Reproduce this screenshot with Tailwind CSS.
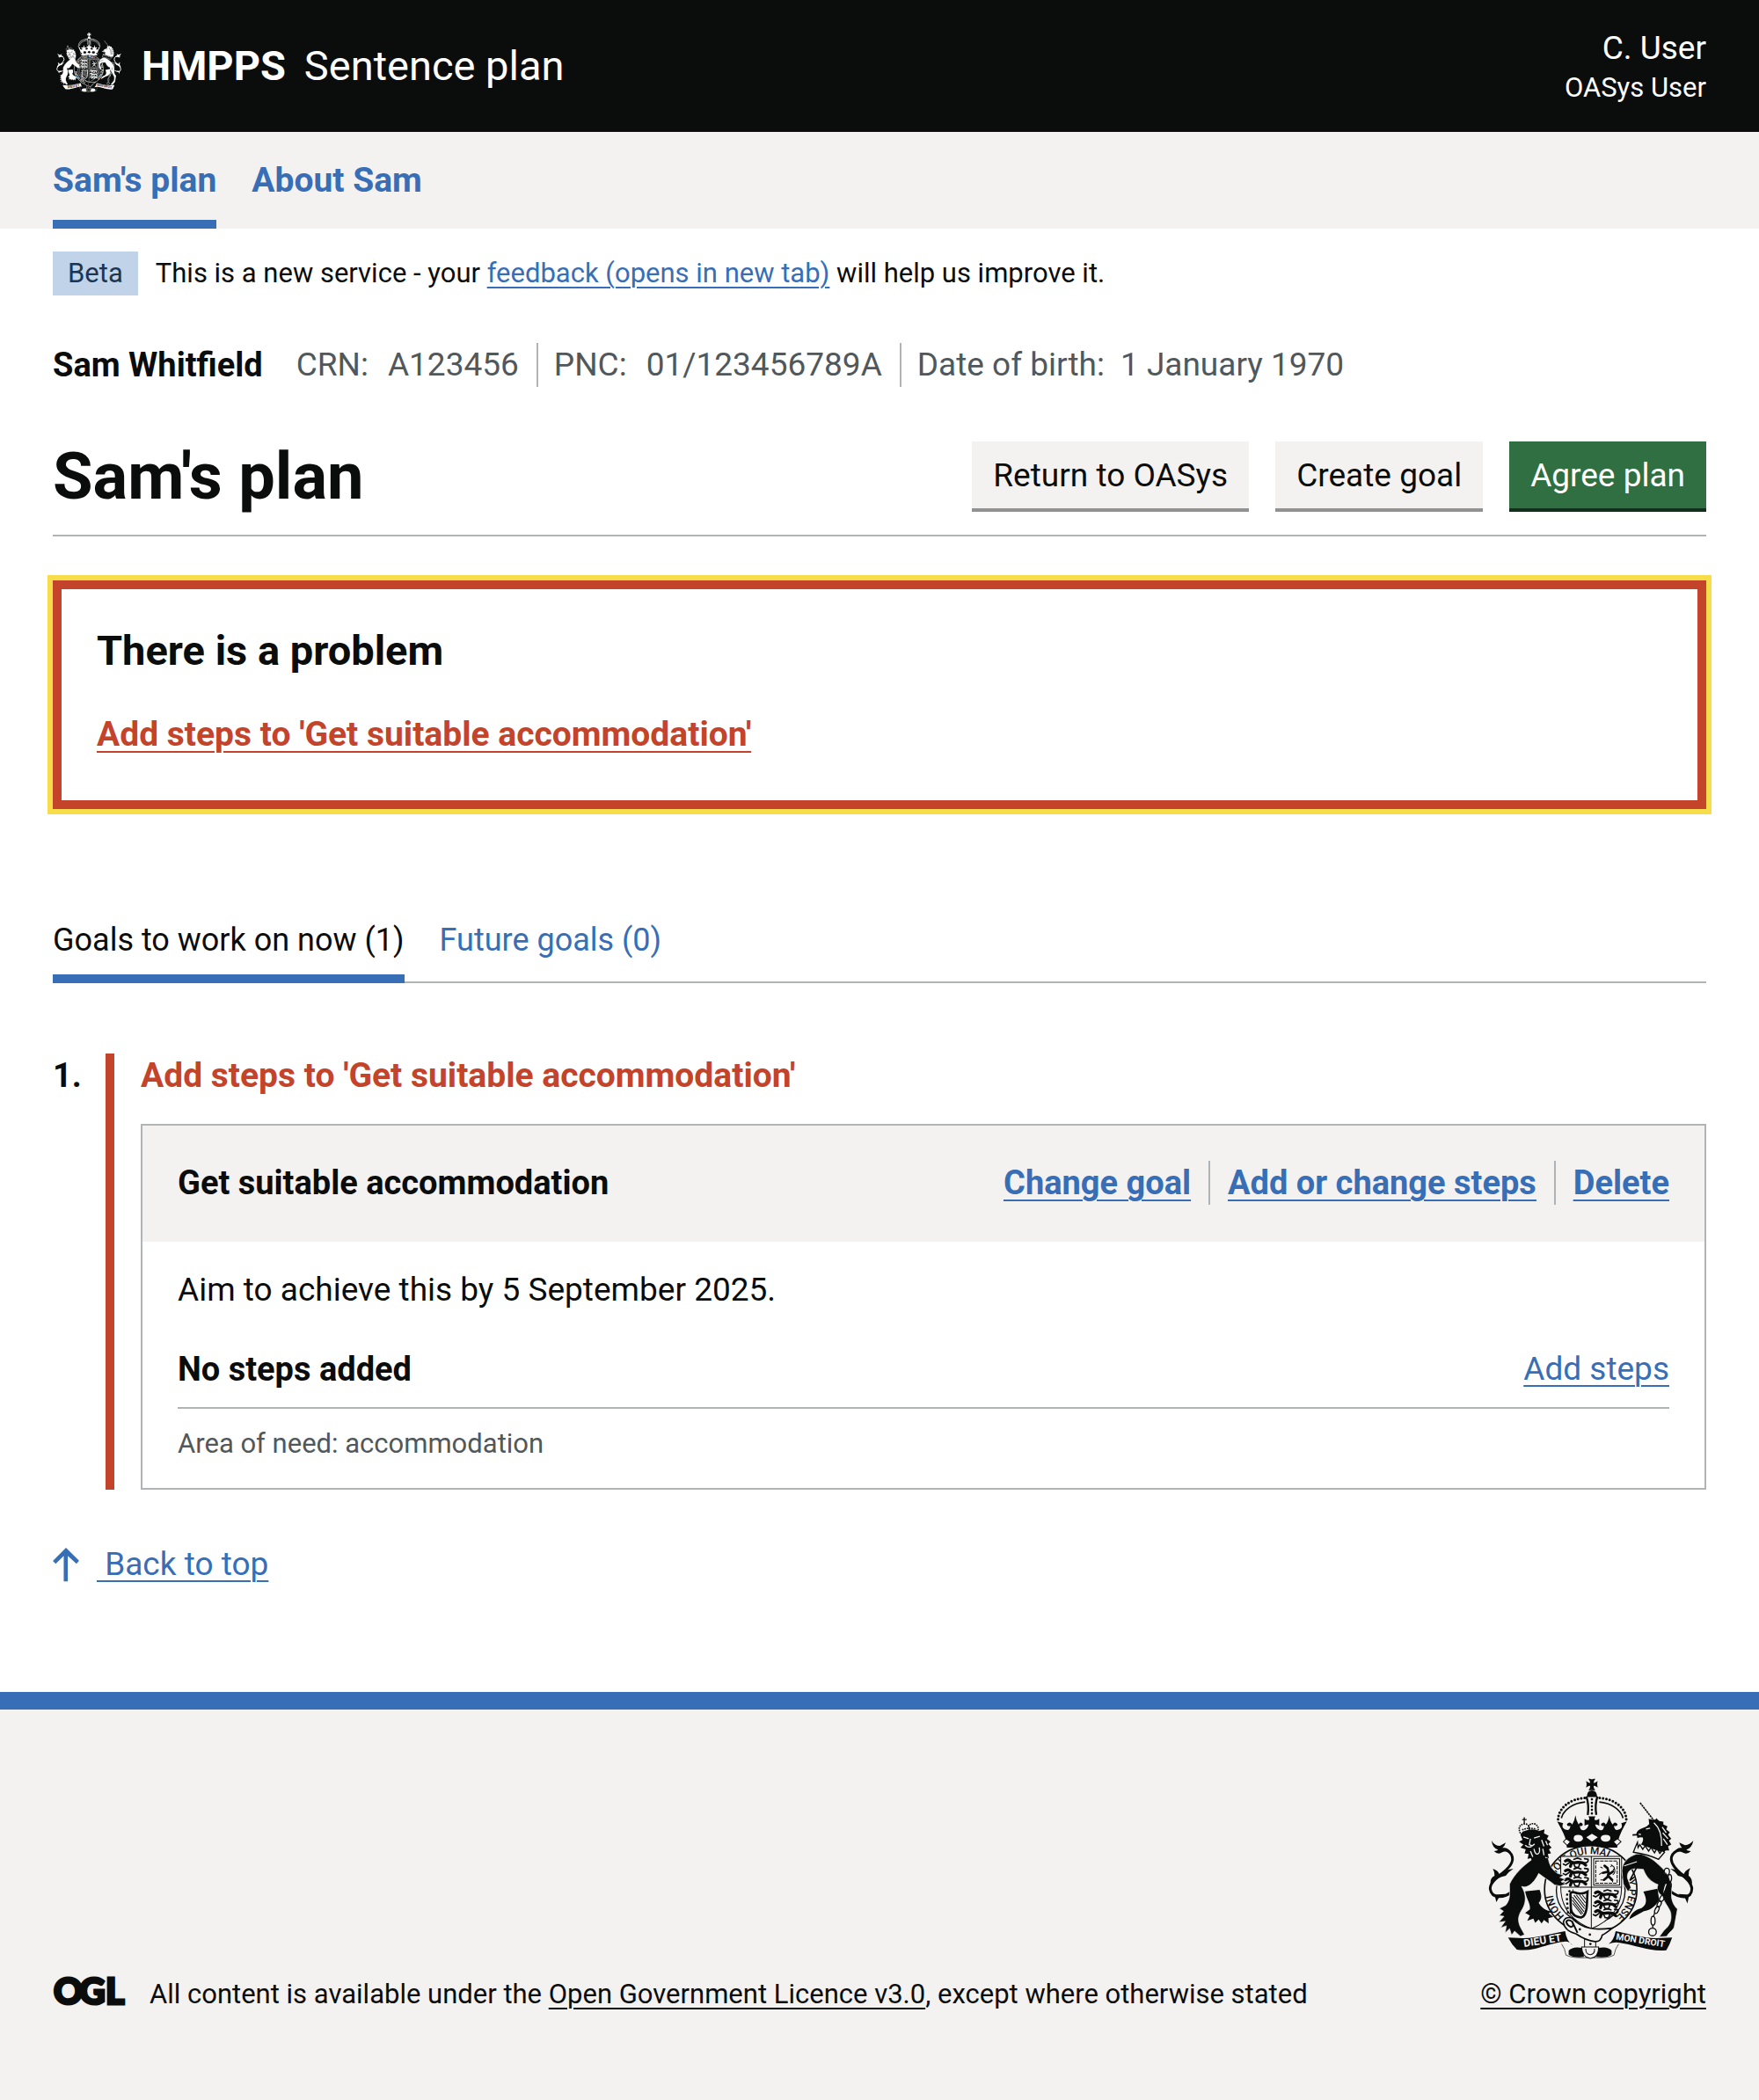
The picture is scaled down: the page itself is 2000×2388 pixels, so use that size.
<!DOCTYPE html>
<html lang="en">
<head>
<meta charset="utf-8">
<meta name="viewport" content="width=device-width, initial-scale=1">
<title>Sam's plan - Sentence plan</title>
<script src="https://cdn.jsdelivr.net/npm/@tailwindcss/browser@4"></script>
</head>
<body class="min-h-screen flex flex-col bg-white font-['Roboto',sans-serif] text-[37px] leading-[50px] text-[#0b0c0c]">

<svg class="hidden" aria-hidden="true">
  <symbol id="crest" viewBox="40 70 700 616" preserveAspectRatio="none">
    <!-- crown -->
    <path fill="currentColor" d="M381 72l6 0q6 4 12 0l6 0q-7 9-6 14q5 1 14-6q-4 8 0 22q-9-7-14-6q-1 8 6 15h-24q7-7 6-15q-5-1-14 6q4-12 0-22q9 7 14 6q1-5-6-14zM376 134q0-22 17-22t18 22z"/>
    <g fill="none" stroke="currentColor">
      <path stroke-width="9" stroke-linecap="round" stroke-dasharray="0 11.500" d="M278 210C280 170 320 140 370 137M510 210C508 170 468 140 418 137"/>
      <path stroke-width="5" d="M289 206C296 178 330 154 370 151M499 206C492 178 458 154 418 151"/>
      <path stroke-width="7" d="M374 132Q384 160 379 195M412 132Q402 160 408 195"/>
      <path stroke-width="8" stroke-linecap="round" stroke-dasharray="0 12" d="M393 142V194"/>
    </g>
    <path fill="currentColor" d="M275 217C290 245 300 262 305 282L308 306H479L482 282C488 262 498 240 512 217L493 223Q500 240 484 245Q470 250 468 232Q480 236 480 226Q470 215 464 228Q454 216 452 196Q450 216 440 228Q434 215 424 226Q424 236 434 232Q434 248 422 247Q408 244 404 228Q412 226 418 232V208Q408 214 403 212Q400 208 405 200H381Q386 208 383 212Q376 214 368 208V232Q374 226 382 228Q378 244 366 247Q352 248 352 232Q362 236 362 226Q354 215 348 228Q340 216 337 196Q334 216 326 228Q318 215 308 226Q308 236 320 232Q318 250 304 245Q288 240 295 223Z"/>
    <g fill="var(--paper)">
      <path d="M331 275q0-12 15-12t17 12q-2 11-17 11t-15-11zM423 275q0-12 17-12t16 12q-1 11-16 11t-17-11zM374 271l19-12 20 12-20 14z"/>
      <path stroke="currentColor" stroke-width="3" d="M296 286l10-10 14 10-11 13zM466 286l14-10 12 10-14 13z"/>
    </g>

    <!-- ribbon beneath the shield -->
    <path fill="var(--paper)" stroke="currentColor" stroke-width="2" d="M290 634Q302 650 305 672Q330 684 388 680Q446 684 468 672Q472 650 484 634"/>
    <path fill="currentColor" d="M314 656Q330 640 362 648L366 678Q330 682 314 670ZM460 656Q446 640 412 648L408 678Q446 682 460 670Z"/>

    <!-- garter -->
    <ellipse cx="389" cy="448" rx="157" ry="149" fill="var(--paper)" stroke="currentColor" stroke-width="5"/>
    <ellipse cx="389" cy="452" rx="117" ry="112" fill="none" stroke="currentColor" stroke-width="4"/>
    <path id="garter-line" fill="none" d="M309 546A130 122 0 1 1 469 546"/>
    <path id="garter-end" fill="none" d="M500 386A130 122 0 0 1 400 571"/>
    <g fill="currentColor" font-family="Roboto, sans-serif" font-weight="500" font-size="35">
      <text><textPath href="#garter-line" startOffset="12">HONI</textPath></text>
      <text><textPath href="#garter-line" startOffset="158">SOIT QUI MAL</textPath></text>
      <text><textPath href="#garter-end" startOffset="34">Y PENSE</textPath></text>
    </g>

    <!-- shield -->
    <path fill="var(--paper)" stroke="currentColor" stroke-width="3" d="M287 336H494V440Q494 540 391 582Q287 540 287 440Z"/>
    <path fill="none" stroke="currentColor" stroke-width="3" d="M391 336V580M287 441H494"/>
    <g id="three-lions" fill="none" stroke="currentColor" stroke-linecap="round">
      <g id="one-lion">
        <path stroke-width="10" d="M303 352q10-8 18 2l10 4q18-4 36 2M324 358l-4 12M362 358l10 8"/>
        <path stroke-width="5" d="M318 356l-14 10-8-4M330 360l6 12 10 2M352 360l-4 12M368 358q14 0 12-12l-12-2M332 346l12-4 12 4"/>
      </g>
      <use href="#one-lion" y="33"/>
      <use href="#one-lion" y="64"/>
    </g>
    <use href="#three-lions" x="102" y="108"/>
    <g fill="none" stroke="currentColor">
      <rect x="399" y="344" width="88" height="90" stroke-width="3"/>
      <rect x="406" y="352" width="73" height="75" stroke-width="3" stroke-dasharray="12 3"/>
      <path stroke-width="8" stroke-linecap="round" d="M436 368l10 8 4 16-4 14M448 388l-18 4M452 396l12-8M446 406l-12 10M450 404l12 12"/>
      <path stroke-width="3" d="M430 376l-8-4M426 392l-8 6M464 386l4-8M464 398q12-6 4-26l-10-8M434 416h-12M462 416l2 8M456 372l6-6"/>
    </g>
    <path fill="none" stroke="currentColor" stroke-width="8" d="M322 530L320 470Q318 456 332 458Q356 468 378 456L376 500Q374 540 356 544Q326 540 322 518"/>
    <path fill="none" stroke="currentColor" stroke-width="7" stroke-dasharray="7 8" d="M312 530L308 480Q306 450 330 452"/>
    <path fill="none" stroke="currentColor" stroke-width="3" d="M326 474L366 524M326 484L362 530M328 496L358 534M332 468L368 514M340 467L370 506M350 466L371 494M360 466L372 482"/>

    <!-- strap and buckle -->
    <path fill="var(--paper)" stroke="currentColor" stroke-width="5" d="M296 560Q300 540 324 545Q350 572 385 580Q410 586 462 580Q440 598 428 604Q424 626 404 626Q372 622 340 600Q300 590 296 560Z"/>
    <path fill="none" stroke="currentColor" stroke-width="6" d="M306 558Q312 548 326 558Q334 574 322 576Q308 572 306 558ZM326 558L344 596"/>
    <path fill="var(--paper)" stroke="currentColor" stroke-width="3" d="M368 616V644M406 626V644M358 644H416Q416 680 388 683Q360 680 358 644ZM372 650Q372 670 388 670Q404 668 402 650"/>
    <circle cx="352" cy="584" r="4" fill="currentColor"/><circle cx="386" cy="602" r="4" fill="currentColor"/><circle cx="388" cy="634" r="4" fill="currentColor"/>

    <!-- lion -->
    <path fill="none" stroke="currentColor" stroke-width="9" d="M122 455C98 476 52 484 47 446C46 410 122 384 123 345C122 318 96 310 76 312"/>
    <path fill="currentColor" d="M52 282Q62 300 80 300L100 289Q96 302 88 308Q106 304 118 322Q100 316 88 322Q74 332 60 318Q70 318 74 314Q54 306 52 282ZM48 430Q46 410 62 402Q62 388 56 378Q74 384 78 396Q100 380 126 378Q110 388 100 402Q70 408 48 430ZM62 466L68 492 78 474Q88 480 98 464Z"/>
    <path fill="currentColor" stroke="var(--paper)" stroke-width="2" d="M192 345C160 366 128 398 113 430C112 460 118 480 100 502L78 513L92 522L78 537L94 540L76 560L98 557L82 579L102 572L98 596L113 582L120 604L130 590L150 608L164 602L150 577C140 555 142 540 152 522C166 502 172 478 160 450L154 438C176 448 200 420 212 394C230 408 250 420 266 433L286 437L304 430L288 422L302 414L284 408L298 400L276 394C258 382 248 366 244 340Z"/>
    <path fill="currentColor" d="M166 455L215 450C224 470 222 484 212 494C220 508 235 522 258 524L246 530L262 542L245 546L246 564L230 552L222 564L212 551L200 562L194 548L173 555L182 537L166 528L182 516C186 500 170 480 166 455Z"/>
    <path fill="currentColor" d="M150 262L158 252Q190 238 212 250L232 244L230 258L246 266L240 276L252 286L245 294L256 306L247 312L254 326L243 328L247 342L234 338L236 352L222 348L218 360L204 350L190 358L186 342L174 344L178 328L164 326L168 312L150 306L160 296L145 286L157 280Z"/>
    <path fill="none" stroke="var(--paper)" stroke-width="4" d="M160 270l18 6M196 274l20-6M184 276l-4 20 10 4 8-6M166 298q10 10 22 4M196 310q4 20 12 18q10-2 6-22M222 280l8 22M226 310l4 22M236 284l6 14M184 318l8 20"/>
    <path fill="none" stroke="currentColor" stroke-width="5" stroke-dasharray="5 3" d="M150 258Q138 232 160 226Q172 224 178 232Q186 222 200 226Q216 236 208 254M156 246Q178 236 204 244"/>
    <path fill="none" stroke="currentColor" stroke-width="4" d="M163 203v22M156 211h15M152 262Q178 244 210 250M178 230l2 18"/>

    <!-- unicorn -->
    <path fill="none" stroke="currentColor" stroke-width="5" stroke-dasharray="7 2" d="M557 154L604 214"/>
    <path fill="none" stroke="currentColor" stroke-width="9" d="M660 455C690 478 732 484 733 446C732 410 664 384 663 345C664 318 694 310 712 312"/>
    <path fill="currentColor" d="M738 282Q726 296 710 298L690 289Q694 302 700 308Q682 304 672 324Q690 316 700 322Q716 332 730 318Q718 318 714 314Q734 306 738 282ZM734 430Q734 410 722 402Q720 388 728 376Q710 384 706 396Q684 380 660 378Q676 388 686 402Q714 408 734 430ZM724 466L718 496 708 474Q698 480 688 464Z"/>
    <path fill="currentColor" stroke="var(--paper)" stroke-width="2" d="M545 328C518 338 497 352 495 385L500 430L516 456L526 442L514 410C512 392 520 380 540 378L568 380C578 408 596 424 618 432C612 446 616 460 632 470C640 498 662 515 662 535C664 560 654 575 638 588L622 610L648 608C655 592 674 586 674 570L684 515C668 500 662 480 664 460C668 425 652 392 626 370C606 350 590 338 560 328Z"/>
    <path fill="currentColor" d="M568 456L616 446L622 484C608 508 590 520 570 522L520 550C524 530 545 516 562 512C582 500 580 480 568 456Z"/>
    <path fill="none" stroke="currentColor" stroke-width="5" d="M545 374L522 418L538 406"/>
    <path fill="none" stroke="var(--paper)" stroke-width="3" d="M503 368L546 354"/>
    <path fill="currentColor" d="M586 208L602 212Q610 214 612 206L622 216L636 218L636 228L650 234L646 244L658 254L652 262L663 276L655 282L663 296L652 302L656 316L644 316L636 324L560 296Q570 282 566 272Q556 270 548 274L546 265L531 266L531 261L544 260Q546 246 566 240Q580 236 588 226Z"/>
    <path fill="none" stroke="var(--paper)" stroke-width="4" d="M577 243l14-3M552 260l8 2M604 222Q632 246 630 300M632 236l14 20M634 256l18 20M636 276l14 20"/>
    <path fill="var(--paper)" stroke="currentColor" stroke-width="4" d="M548 288L542 302L534 322Q585 330 620 346L640 322L632 316L624 326L614 310L606 324L594 306L586 318L574 300L566 312L556 296L550 306Z"/>
    <g fill="none" stroke-width="4" stroke="var(--paper)"><path d="M640 396Q640 382 652 378M646 430Q640 440 638 460"/></g>
    <g fill="none" stroke="currentColor" stroke-width="4">
      <ellipse cx="648" cy="388" rx="9" ry="12"/><ellipse cx="658" cy="410" rx="6" ry="12"/><ellipse cx="656" cy="434" rx="7" ry="12"/><ellipse cx="646" cy="457" rx="6" ry="12" transform="rotate(25 646 457)"/><ellipse cx="632" cy="478" rx="7" ry="13" transform="rotate(30 632 478)"/><ellipse cx="614" cy="518" rx="6" ry="13" transform="rotate(25 614 518)"/><ellipse cx="622" cy="498" rx="6" ry="11" transform="rotate(25 622 498)"/><ellipse cx="601" cy="555" rx="7" ry="15"/><path d="M606 530L602 542M600 570V580"/><circle cx="599" cy="593" r="13"/>
    </g>

    <!-- motto scroll -->
    <path fill="currentColor" d="M108 612L160 614C210 612 250 600 302 590Q306 622 328 640Q318 624 298 626C262 630 230 642 200 650Q165 658 138 653Q120 636 108 612ZM666 612L612 614C562 612 520 600 474 590Q468 620 450 634Q470 626 488 630C520 634 560 648 590 652Q620 658 646 655Q658 636 666 612Z"/>
    <g fill="var(--paper)" font-family="Roboto, sans-serif" font-weight="700" text-anchor="middle">
      <text x="225" y="634" font-size="36" transform="rotate(-9 225 622)">DIEU ET</text>
      <text x="558" y="632" font-size="31" transform="rotate(9 558 622)">MON DROIT</text>
    </g>
  </symbol>
</svg>

<header class="bg-[#0b0c0c] text-white">
  <div class="flex h-[150px] items-center justify-between px-[60px]">
    <a href="#" class="flex items-center text-[47px] leading-[60px]">
      <svg class="mb-[8px] ml-[4px] h-[68px] w-[74px] [--paper:#0b0c0c]" role="img" aria-label="Royal coat of arms"><use href="#crest"/></svg>
      <span class="ml-[23px] font-bold">HMPPS</span>
      <span class="ml-[21px]">Sentence plan</span>
    </a>
    <div class="text-right">
      <div>C. User</div>
      <div class="text-[31px] leading-[40px]">OASys User</div>
    </div>
  </div>
</header>

<nav class="flex gap-[40px] bg-[#f3f2f1] px-[60px] text-[39px] font-bold text-[#386eb5]" aria-label="Primary">
  <a href="#" class="border-b-[10px] border-[#386eb5] pt-[30px] pb-[20px]" aria-current="page">Sam's plan</a>
  <a href="#" class="pt-[30px] pb-[30px]">About Sam</a>
</nav>

<main class="grow px-[60px] pt-[26px] pb-[106px]">
  <div class="flex items-center gap-[20px] text-[31px]">
    <strong class="bg-[#c0d3e9] px-[17px] font-normal text-[#1b3653]">Beta</strong>
    <p>This is a new service - your <a href="#" class="text-[#386eb5] underline decoration-2 underline-offset-[5px]">feedback (opens in new tab)</a> will help us improve it.</p>
  </div>

  <dl class="mt-[54px] flex text-[#50585c]">
    <dt class="pr-[38px] text-[38px] font-bold text-[#0b0c0c]">Sam Whitfield</dt>
    <dd class="flex gap-[22px] border-r-2 border-[#b1b4b6] pr-[20px]"><span>CRN:</span><span>A123456</span></dd>
    <dd class="flex gap-[22px] border-r-2 border-[#b1b4b6] pr-[20px] pl-[18px]"><span>PNC:</span><span>01/123456789A</span></dd>
    <dd class="flex gap-[18px] pl-[18px]"><span>Date of birth:</span><span>1 January 1970</span></dd>
  </dl>

  <div class="mt-[62px] flex items-center justify-between border-b-2 border-[#b1b4b6] pb-[26px]">
    <h1 class="text-[74px] leading-[80px] font-bold">Sam's plan</h1>
    <div class="flex gap-[30px]">
      <button type="button" class="mb-[4px] bg-[#f3f2f1] px-[24px] pt-[14px] pb-[12px] shadow-[0_4px_0_#929191]">Return to OASys</button>
      <button type="button" class="mb-[4px] bg-[#f3f2f1] px-[24px] pt-[14px] pb-[12px] shadow-[0_4px_0_#929191]">Create goal</button>
      <button type="button" class="mb-[4px] bg-[#2f6f41] px-[24px] pt-[14px] pb-[12px] text-white shadow-[0_4px_0_#10301c]">Agree plan</button>
    </div>
  </div>

  <div role="alert" class="mt-[50px] border-[10px] border-[#c4432b] px-[40px] pt-[40px] pb-[50px] outline-[6px] outline-[#f8dd4a] outline-solid">
    <h2 class="text-[47px] leading-[60px] font-bold">There is a problem</h2>
    <a href="#goal" class="mt-[40px] inline-block align-top text-[39px] font-bold text-[#c4432b] underline decoration-2 underline-offset-[6px]">Add steps to 'Get suitable accommodation'</a>
  </div>

  <nav class="mt-[124px] flex gap-[40px] text-[36px] shadow-[inset_0_-2px_0_#b1b4b6]" aria-label="Goals">
    <a href="#" class="border-b-[10px] border-[#386eb5] pb-[14px]" aria-current="page">Goals to work on now (1)</a>
    <a href="#" class="pb-[24px] text-[#386eb5]">Future goals (0)</a>
  </nav>

  <ol class="mt-[80px]">
    <li id="goal" class="flex">
      <span class="w-[60px] text-[38px] font-bold">1.</span>
      <div class="min-w-0 grow border-l-[10px] border-[#c4432b] pl-[30px]">
        <p class="pb-[30px] text-[39px] font-bold text-[#c4432b]">Add steps to 'Get suitable accommodation'</p>
        <article class="border-2 border-[#b1b4b6]">
          <div class="flex justify-between bg-[#f3f2f1] px-[40px] pt-[40px] pb-[42px] text-[38px] font-bold">
            <h2>Get suitable accommodation</h2>
            <div class="flex text-[#386eb5] underline decoration-2 underline-offset-[6px]">
              <a href="#" class="border-r-2 border-[#b1b4b6] pr-[20px]">Change goal</a>
              <a href="#" class="border-r-2 border-[#b1b4b6] px-[20px]">Add or change steps</a>
              <a href="#" class="pl-[20px]">Delete</a>
            </div>
          </div>
          <div class="px-[40px] pt-[30px] pb-[30px]">
            <p>Aim to achieve this by 5 September 2025.</p>
            <div class="mt-[40px] flex justify-between border-b-2 border-[#b1b4b6] pb-[18px]">
              <h3 class="text-[38px] font-bold">No steps added</h3>
              <a href="#" class="text-[#386eb5] underline decoration-2 underline-offset-[6px]">Add steps</a>
            </div>
            <p class="mt-[20px] text-[31px] leading-[40px] text-[#50585c]">Area of need: accommodation</p>
          </div>
        </article>
      </div>
    </li>
  </ol>

  <a href="#" class="mt-[60px] inline-flex items-center gap-[20px] text-[#386eb5]">
    <svg class="h-[39px] w-[30px]" viewBox="0 0 13 17" fill="currentColor" aria-hidden="true"><path d="M6.500 0L0 6.500 1.400 8l4-4v12.700h2V4l4.300 4L13 6.400z"/></svg>
    <span class="whitespace-pre underline decoration-2 underline-offset-[6px]"> Back to top</span>
  </a>
</main>

<footer class="border-t-[20px] border-[#386eb5] bg-[#f3f2f1] text-[31px] leading-[40px]">
  <div class="flex items-end justify-between px-[60px] pt-[78px] pb-[100px]">
    <div class="flex items-center gap-[24px]">
      <svg class="-my-[2px] -ml-[4px] h-[44px] w-[90px]" viewBox="0 0 90 44" role="img" aria-label="Open Government Licence"><text y="33" x="5 34 64" fill="currentColor" stroke="currentColor" stroke-width="3" font-family="Lato, sans-serif" font-weight="900" font-size="41">OGL</text></svg>
      <p>All content is available under the <a href="#" class="underline decoration-2 underline-offset-[5px]">Open Government Licence v3.0</a>, except where otherwise stated</p>
    </div>
    <a href="#" class="flex flex-col items-end underline decoration-2 underline-offset-[5px]">
      <svg class="mr-[14px] h-[206px] w-[234px] [--paper:#f3f2f1]" role="img" aria-label="Royal coat of arms"><use href="#crest"/></svg>
      <span class="mt-[20px]">© Crown copyright</span>
    </a>
  </div>
</footer>
</body>
</html>
